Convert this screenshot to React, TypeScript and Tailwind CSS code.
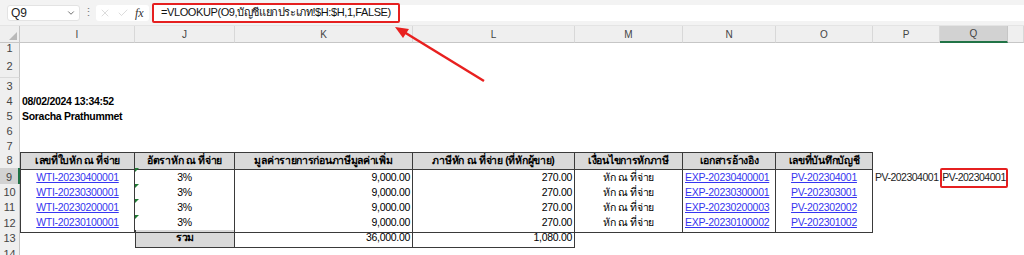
import { ChevronDown, X, Check } from "lucide-react";

const cols =
  "grid grid-cols-[20px_115px_100px_178px_162px_108px_93px_97px_67px_68px_1fr]";

const rows = [
  { wti: "WTI-20230400001", exp: "EXP-20230400001", pv: "PV-202304001" },
  { wti: "WTI-20230300001", exp: "EXP-20230300001", pv: "PV-202303001" },
  { wti: "WTI-20230200001", exp: "EXP-20230200003", pv: "PV-202302002" },
  { wti: "WTI-20230100001", exp: "EXP-20230100002", pv: "PV-202301002" },
];

const heads = [
  "เลขที่ใบหัก ณ ที่จ่าย",
  "อัตราหัก ณ ที่จ่าย",
  "มูลค่ารายการก่อนภาษีมูลค่าเพิ่ม",
  "ภาษีหัก ณ ที่จ่าย (ที่หักผู้ขาย)",
  "เงื่อนไขการหักภาษี",
  "เอกสารอ้างอิง",
  "เลขที่บันทึกบัญชี",
];

const letters = ["I", "J", "K", "L", "M", "N", "O", "P", "Q", ""];

function RowNum({ n, active }: { n: number; active?: boolean }) {
  return (
    <div
      className={`flex items-center justify-center border-b border-[#dadada] text-[11px] tracking-normal text-[#444] ${
        active
          ? "bg-[#d2d2d2] border-r-2 border-r-[#217346]"
          : "bg-[#efefef] border-r border-r-[#c6c6c6]"
      }`}
    >
      {n}
    </div>
  );
}

function Link({ children }: { children: string }) {
  return <span className="text-[#3535f0] underline">{children}</span>;
}

export default function App() {
  return (
    <div className="relative w-[1024px] h-[255px] overflow-hidden bg-white font-['Liberation_Sans','Noto_Sans',sans-serif] text-[10.5px] tracking-[-0.3px] text-black">
      {/* Formula bar */}
      <div className="flex items-center h-[26px] bg-[#f3f3f3] border-b border-[#e4e4e4] pl-[7px] tracking-normal">
        <div className="flex items-center justify-between w-[73px] h-[16px] bg-white rounded-[3px] border border-[#e3e3e3] px-[3px] text-[12px] text-[#222]">
          Q9
          <ChevronDown size={10} className="text-[#555]" />
        </div>
        <div className="w-[16px] text-center text-[#777] text-[11px] leading-none">⋮</div>
        <div className="flex items-center gap-[6px] w-[53px] h-[16px] bg-white rounded-[3px] px-[3px]">
          <X size={12} strokeWidth={1.2} className="text-[#c4c4c4]" />
          <Check size={12} strokeWidth={1.2} className="text-[#c4c4c4]" />
          <span className="font-['Liberation_Serif',serif] italic text-[12px] text-[#333]">fx</span>
        </div>
        <div className="flex items-center flex-1 h-[16px] bg-white ml-[3px]">
          <span className="flex items-center h-[20px] px-[7px] border-2 border-[#e52020] rounded-[2px] text-[11px] tracking-[-0.4px] text-[#111] whitespace-nowrap">
            =VLOOKUP(O9,บัญชีแยกประเภท!$H:$H,1,FALSE)
          </span>
        </div>
      </div>

      {/* Column headers */}
      <div className={`${cols} h-[14px]`}>
        <div className="relative bg-[#efefef] border-r border-b border-[#c6c6c6]">
          <div className="absolute right-[2px] bottom-[2px] w-0 h-0 border-l-[8px] border-b-[8px] border-l-transparent border-b-[#b9b9b9]" />
        </div>
        {letters.map((l, i) => (
          <div
            key={i}
            className={`flex items-center justify-center text-[10px] tracking-normal text-[#444] ${
              l === "Q"
                ? "bg-[#d2d2d2] border-b-2 border-[#217346] border-r border-r-[#c6c6c6]"
                : "bg-[#efefef] border-b border-[#c6c6c6] border-r border-r-[#d8d8d8]"
            }`}
          >
            {l}
          </div>
        ))}
      </div>

      {/* Rows 1-7 */}
      <div className={`${cols} h-[15px]`}>
        <RowNum n={1} />
      </div>
      <div className={`${cols} h-[23px]`}>
        <RowNum n={2} />
      </div>
      <div className={`${cols} h-[15px]`}>
        <RowNum n={3} />
      </div>
      <div className={`${cols} h-[15px]`}>
        <RowNum n={4} />
        <div className="col-span-3 flex items-center pl-[2px] font-bold whitespace-nowrap">
          08/02/2024 13:34:52
        </div>
      </div>
      <div className={`${cols} h-[15px]`}>
        <RowNum n={5} />
        <div className="col-span-3 flex items-center pl-[2px] font-bold whitespace-nowrap">
          Soracha Prathummet
        </div>
      </div>
      <div className={`${cols} h-[15px]`}>
        <RowNum n={6} />
      </div>
      <div className={`${cols} h-[14px]`}>
        <RowNum n={7} />
      </div>

      {/* Table header */}
      <div className={`${cols} h-[16px]`}>
        <RowNum n={8} />
        {heads.map((h, i) => (
          <div
            key={i}
            className={`flex items-center justify-center bg-[#d9d9d9] border-y border-r border-[#3a3a3a] font-bold whitespace-nowrap overflow-hidden ${
              i === 0 ? "border-l" : ""
            }`}
          >
            {h}
          </div>
        ))}
      </div>

      {/* Data rows */}
      {rows.map((r, i) => {
        const last = i === rows.length - 1;
        const b = `border-r border-[#3a3a3a] ${last ? "border-b" : ""}`;
        return (
          <div key={i} className={`${cols} ${i % 2 === 0 ? "h-[16px]" : "h-[15px]"}`}>
            <RowNum n={9 + i} active={i === 0} />
            <div className={`flex items-center justify-center border-l ${b}`}>
              <Link>{r.wti}</Link>
            </div>
            <div className={`relative flex items-center justify-center ${b}`}>
              <div className="absolute left-0 top-0 w-0 h-0 border-t-[4px] border-r-[4px] border-t-[#1f7a33] border-r-transparent" />
              3%
            </div>
            <div className={`flex items-center justify-end pr-[2px] ${b}`}>9,000.00</div>
            <div className={`flex items-center justify-end pr-[2px] ${b}`}>270.00</div>
            <div className={`flex items-center justify-center whitespace-nowrap ${b}`}>หัก ณ ที่จ่าย</div>
            <div className={`flex items-center pl-[2px] whitespace-nowrap overflow-hidden ${b}`}>
              <Link>{r.exp}</Link>
            </div>
            <div className={`flex items-center justify-center ${b}`}>
              <Link>{r.pv}</Link>
            </div>
            {i === 0 && (
              <>
                <div className="flex items-center pl-[2px] text-[#222] whitespace-nowrap tracking-[-0.5px]">
                  PV-202304001
                </div>
                <div className="flex items-center justify-center text-[#222] whitespace-nowrap tracking-[-0.5px] border-2 border-[#e52020] rounded-[2px]">
                  PV-202304001
                </div>
              </>
            )}
          </div>
        );
      })}

      {/* Total row */}
      <div className={`${cols} h-[16px]`}>
        <RowNum n={13} />
        <div />
        <div className="flex items-center justify-center bg-[#d9d9d9] border-l border-r border-b border-[#3a3a3a] font-bold">
          รวม
        </div>
        <div className="flex items-center justify-end pr-[2px] border-r border-b border-[#3a3a3a]">36,000.00</div>
        <div className="flex items-center justify-end pr-[2px] border-r border-b border-[#3a3a3a]">1,080.00</div>
      </div>
      <div className={`${cols} h-[15px]`}>
        <RowNum n={14} />
      </div>

      {/* Red arrow */}
      <svg className="absolute inset-0 pointer-events-none" width="1024" height="255">
        <line x1="484" y1="81" x2="404" y2="32" stroke="#e8201f" strokeWidth="2.5" />
        <polygon points="395,27 409,29 403,38" fill="#e8201f" />
      </svg>
    </div>
  );
}
